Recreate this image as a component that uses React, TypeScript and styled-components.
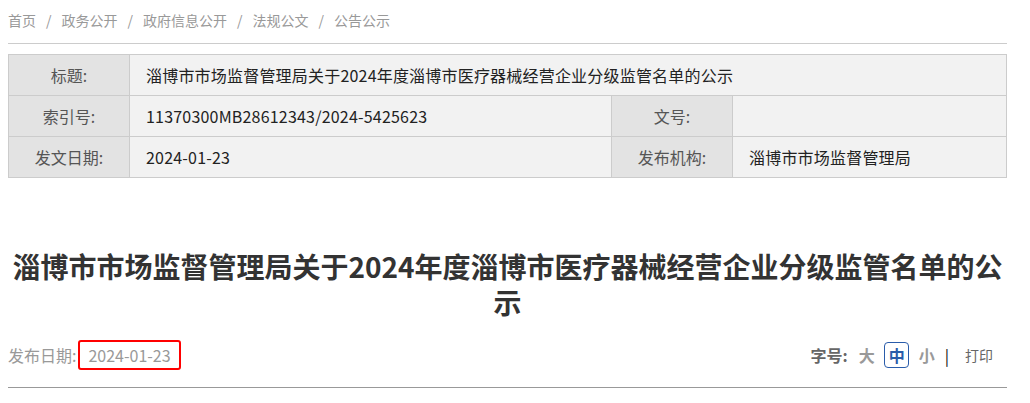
import styled, { createGlobalStyle } from "styled-components";

const GlobalStyle = createGlobalStyle`
  html, body {
    margin: 0;
    padding: 0;
    background: #fff;
    font-family: "Noto Sans CJK SC", "Noto Sans", sans-serif;
  }
`

const Page = styled.div`
  width: 999px;
  margin-left: 8px;
`

const Crumbs = styled.div`
  display: flex;
  align-items: center;
  gap: 10px;
  padding-top: 8px;
  padding-bottom: 11px;
  line-height: 24px;
  font-size: 14px;
  color: #999;
  border-bottom: 1px solid #ccc;
`

const InfoTable = styled.table`
  margin-top: 10px;
  width: 100%;
  border-collapse: collapse;
  font-size: 16px;
  table-layout: fixed;
`

const Label = styled.td`
  height: 40px;
  padding: 0;
  background: #e3e3e3;
  border: 1px solid #ccc;
  color: #555;
  text-align: center;
`

const Value = styled.td`
  height: 40px;
  padding: 0 0 0 16px;
  background: #f2f2f2;
  border: 1px solid #ccc;
  color: #222;
  white-space: nowrap;
  letter-spacing: 0.2px;
`

const Title = styled.h1`
  margin: 70px 0 0;
  font-size: 28px;
  line-height: 36px;
  font-weight: 700;
  color: #333;
  text-align: center;
`

const Meta = styled.div`
  display: flex;
  justify-content: space-between;
  align-items: center;
  margin-top: 20px;
  padding-bottom: 17px;
  border-bottom: 1px solid #999;
`

const DateInfo = styled.div`
  display: flex;
  align-items: center;
  font-size: 16px;
  color: #999;
`

const DateBox = styled.span`
  box-sizing: border-box;
  margin-left: 2px;
  height: 30px;
  line-height: 26px;
  padding: 0 8px;
  border: 2px solid #f00;
  border-radius: 3px;
`

const Tools = styled.div`
  display: flex;
  align-items: center;
  padding-right: 14px;
  font-size: 16px;
  color: #999;
`

const ToolLabel = styled.span`
  font-weight: 700;
  color: #666;
  margin-right: 4px;
`

const Size = styled.span<{ $active?: boolean }>`
  box-sizing: border-box;
  font-weight: 700;
  width: 25px;
  height: 26px;
  line-height: 24px;
  text-align: center;
  margin: 0 2.5px;
  border-radius: 4px;
  border: 1px solid ${p => (p.$active ? "#2a5caa" : "transparent")};
  color: ${p => (p.$active ? "#2a5caa" : "#999")};
`

const Bar = styled.span`
  color: #111;
  margin: 0 16px 0 3px;
`

const Print = styled.span`
  font-size: 14px;
  color: #666;
`

const crumbs = ["首页", "政务公开", "政府信息公开", "法规公文", "公告公示"]
const title = "淄博市市场监督管理局关于2024年度淄博市医疗器械经营企业分级监管名单的公示"

function App() {
  return (
    <Page>
      <GlobalStyle />
      <Crumbs>
        {crumbs.map((c, i) => (
          <span key={c} style={{ display: "contents" }}>
            {i > 0 && <span>/</span>}
            <span>{c}</span>
          </span>
        ))}
      </Crumbs>
      <InfoTable>
        <colgroup>
          <col style={{ width: 121 }} />
          <col style={{ width: 482 }} />
          <col style={{ width: 121 }} />
          <col />
        </colgroup>
        <tbody>
          <tr>
            <Label>标题:</Label>
            <Value colSpan={3}>{title}</Value>
          </tr>
          <tr>
            <Label>索引号:</Label>
            <Value>11370300MB28612343/2024-5425623</Value>
            <Label>文号:</Label>
            <Value></Value>
          </tr>
          <tr>
            <Label>发文日期:</Label>
            <Value>2024-01-23</Value>
            <Label>发布机构:</Label>
            <Value>淄博市市场监督管理局</Value>
          </tr>
        </tbody>
      </InfoTable>
      <Title>{title}</Title>
      <Meta>
        <DateInfo>
          发布日期:<DateBox>2024-01-23</DateBox>
        </DateInfo>
        <Tools>
          <ToolLabel>字号:</ToolLabel>
          <Size>大</Size>
          <Size $active>中</Size>
          <Size>小</Size>
          <Bar>|</Bar>
          <Print>打印</Print>
        </Tools>
      </Meta>
    </Page>
  )
}

export default App
